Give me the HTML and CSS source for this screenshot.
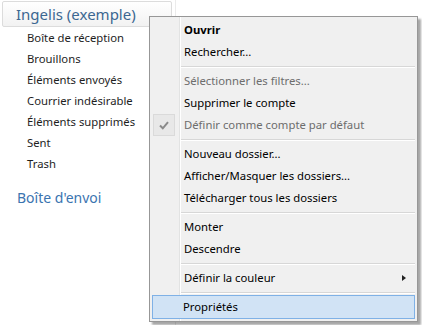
FILE: index.html
```html
<!DOCTYPE html>
<html lang="fr">
<head>
  <meta charset="UTF-8">
  <title>Dossiers</title>
  <link rel="stylesheet" href="styles.css">
</head>
<body>
  <div class="pane">
    <div class="account">Ingelis (exemple)</div>
    <ul class="folders">
      <li>Boîte de réception</li>
      <li>Brouillons</li>
      <li>Éléments envoyés</li>
      <li>Courrier indésirable</li>
      <li>Éléments supprimés</li>
      <li>Sent</li>
      <li>Trash</li>
    </ul>
    <div class="outbox">Boîte d'envoi</div>
  </div>

  <!-- context menu over the pane -->
  <div class="menu">
    <div class="item bold">Ouvrir</div>
    <div class="item">Rechercher...</div>
    <div class="sep"></div>
    <div class="item disabled">Sélectionner les filtres...</div>
    <div class="item">Supprimer le compte</div>
    <div class="item disabled">
      <span class="check">
        <svg width="10" height="9" viewBox="0 0 10 9"><path d="M1 4.5 L3.8 7.3 L9 1.2" fill="none" stroke="#8a8a8a" stroke-width="2"/></svg>
      </span>
      Définir comme compte par défaut
    </div>
    <div class="sep"></div>
    <div class="item">Nouveau dossier...</div>
    <div class="item">Afficher/Masquer les dossiers...</div>
    <div class="item">Télécharger tous les dossiers</div>
    <div class="sep"></div>
    <div class="item">Monter</div>
    <div class="item">Descendre</div>
    <div class="sep"></div>
    <div class="item">Définir la couleur<span class="arrow"></span></div>
    <div class="sep"></div>
    <div class="item active">Propriétés</div>
  </div>
</body>
</html>
```

FILE: styles.css
```css
body {
  margin: 0;
  font-family: "Noto Sans", sans-serif;
  background: #fff;
  width: 422px;
  height: 325px;
  overflow: hidden;
  position: relative;
}
.pane {
  width: 176px;
  height: 325px;
  border-right: 1px solid #ebebeb;
  box-sizing: border-box;
  padding-top: 1px;
}
.account {
  margin-left: 2px;
  width: 155px;
  height: 24px;
  border: 1px solid #dcdcdc;
  border-radius: 2px;
  background: linear-gradient(#ffffff, #f2f2f2);
  color: #3c6791;
  font-size: 15px;
  line-height: 24px;
  padding-left: 13px;
}
.folders {
  list-style: none;
  margin: 0;
  padding: 0 0 0 27px;
}
.folders li {
  height: 21px;
  line-height: 21px;
  font-size: 11.3px;
  color: #1e1e1e;
  white-space: nowrap;
}
.outbox {
  margin-top: 13px;
  padding-left: 17px;
  font-size: 14px;
  line-height: 22px;
  color: #3b74b0;
}
.menu {
  position: absolute;
  left: 149px;
  top: 16px;
  width: 267px;
  padding: 2px 0;
  background: #f0f0f0 linear-gradient(to right, transparent 29px, #e2e3e3 29px, #e2e3e3 30px, #ffffff 30px, #ffffff 31px, transparent 31px);
  border: 1px solid #979797;
  box-shadow: 3px 3px 2px rgba(0, 0, 0, 0.35);
  font-size: 11.3px;
  color: #000;
}
.item {
  position: relative;
  height: 22px;
  line-height: 22px;
  padding-left: 32px;
  margin: 0 2px;
  white-space: nowrap;
}
.bold {
  font-weight: bold;
}
.disabled {
  color: #6d6d6d;
}
.sep {
  height: 7px;
  margin-left: 31px;
  margin-right: 2px;
  background: linear-gradient(#f0f0f0 3px, #d7d7d7 3px, #d7d7d7 4px, #ffffff 4px, #ffffff 5px, #f0f0f0 5px);
}
.check {
  position: absolute;
  left: 1px;
  top: 0;
  width: 20px;
  height: 20px;
  border: 1px solid #dadada;
  background: #e8e8e8;
  display: flex;
  align-items: center;
  justify-content: center;
}
.arrow {
  position: absolute;
  right: 9px;
  top: 8px;
  border-left: 4px solid #222;
  border-top: 3.5px solid transparent;
  border-bottom: 3.5px solid transparent;
}
.active {
  background: #d1e3f5;
  border: 1px solid #7fb1e6;
  height: 22px;
  line-height: 22px;
  padding-left: 30px;
  margin-top: -1px;
}
```
